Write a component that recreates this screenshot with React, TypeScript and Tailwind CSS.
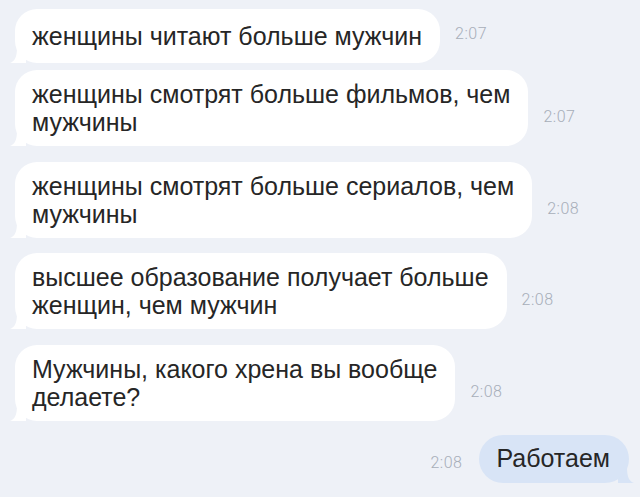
const incoming = [
  { lines: ["женщины читают больше мужчин"], time: "2:07", mt: "mt-[9px]" },
  { lines: ["женщины смотрят больше фильмов, чем", "мужчины"], time: "2:07", mt: "mt-[7px]" },
  { lines: ["женщины смотрят больше сериалов, чем", "мужчины"], time: "2:08", mt: "mt-[16px]" },
  { lines: ["высшее образование получает больше", "женщин, чем мужчин"], time: "2:08", mt: "mt-[15px]" },
  { lines: ["Мужчины, какого хрена вы вообще", "делаете?"], time: "2:08", mt: "mt-[16px]" },
];

function TailLeft() {
  return (
    <svg className="absolute -left-[5px] bottom-0" width="16" height="16" viewBox="0 0 16 16">
      <path d="M16 0 L16 16 L0 16 C5 14 7 10 7 0 Z" fill="#ffffff" />
    </svg>
  );
}

function TailRight() {
  return (
    <svg className="absolute -right-[5px] bottom-0" width="16" height="16" viewBox="0 0 16 16">
      <path d="M0 0 L0 16 L16 16 C11 14 9 10 9 0 Z" fill="#d8e4f6" />
    </svg>
  );
}

export default function App() {
  return (
    <div
      className="w-[640px] h-[497px] overflow-hidden bg-[#eef1f7] pl-[15px] pr-[11px] flex flex-col"
      style={{ fontFamily: '"Liberation Sans", Arial, sans-serif' }}
    >
      {incoming.map((m, i) => (
        <div key={i} className={`flex items-end gap-[15px] ${m.mt}`}>
          <div className="relative">
            <TailLeft />
            <div
              className={`relative bg-white rounded-[22px] pl-[17px] pr-[18px] ${
                m.lines.length === 1 ? "py-[13px]" : "py-[10px]"
              } text-[25px] leading-[28px] text-[#262626] whitespace-nowrap`}
            >
              {m.lines.map((l, j) => (
                <div key={j}>{l}</div>
              ))}
            </div>
          </div>
          <span className="mb-[17px] text-[16px] font-light text-[#a7aeb9] tracking-[0.5px]" style={{ fontFamily: "Roboto, sans-serif" }}>
            {m.time}
          </span>
        </div>
      ))}

      <div className="flex items-center justify-end gap-[17px] mt-[14px]">
        <span className="text-[16px] font-light text-[#a7aeb9] tracking-[0.5px] mt-[8px]" style={{ fontFamily: "Roboto, sans-serif" }}>
          2:08
        </span>
        <div className="relative">
          <TailRight />
          <div className="relative bg-[#d8e4f6] rounded-[24px] h-[48px] pl-[17px] pr-[19px] flex items-center text-[25px] text-[#262626] whitespace-nowrap">
            Работаем
          </div>
        </div>
      </div>
    </div>
  );
}
